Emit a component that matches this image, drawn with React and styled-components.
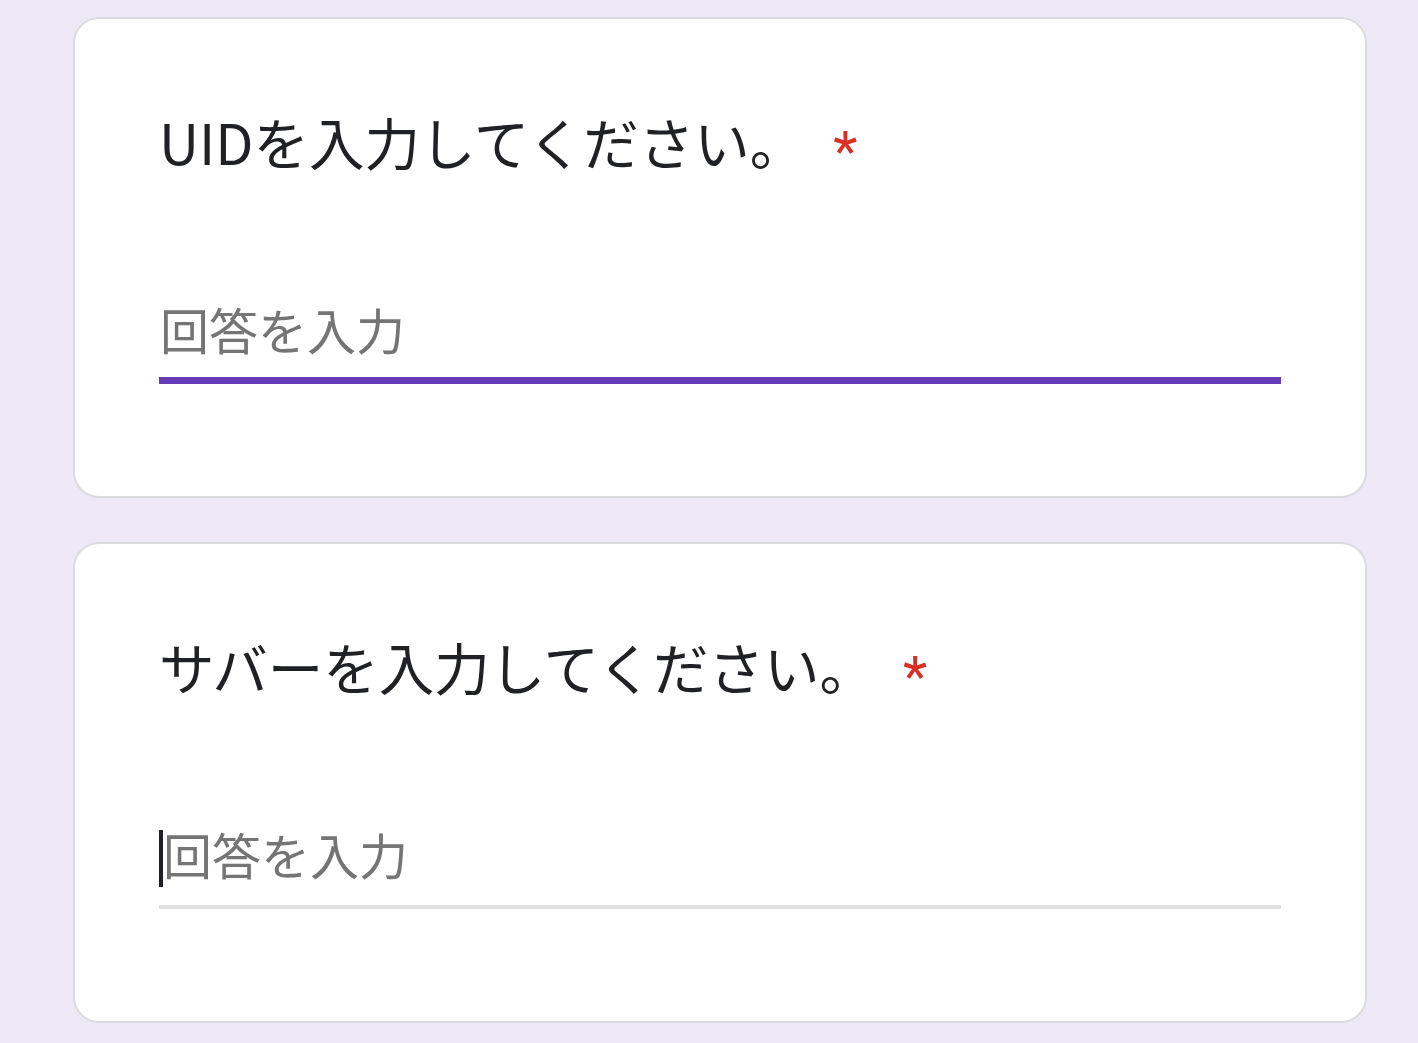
import React from "react";
import styled, { createGlobalStyle } from "styled-components";

const Global = createGlobalStyle`
  html, body {
    margin: 0;
    padding: 0;
    background: #ede9f7;
  }
  body {
    font-family: "Noto Sans CJK JP", "Noto Sans", sans-serif;
  }
`;

const Page = styled.main`
  display: flex;
  flex-direction: column;
  gap: 44px;
  padding: 17px 51px 20px 73px;
  min-height: 1043px;
  box-sizing: border-box;
`;

const Card = styled.section`
  background: #ffffff;
  border: 2px solid #dadce0;
  border-radius: 26px;
  padding: 89px 84px 112px 84px;
  display: flex;
  flex-direction: column;
`;

const Title = styled.div`
  font-family: "Noto Sans CJK JP", sans-serif;
  font-size: 55.5px;
  line-height: 66px;
  height: 66px;
  color: #202124;
  white-space: nowrap;
`;

const Required = styled.span`
  font-family: Roboto, "Noto Sans", sans-serif;
  font-size: 56px;
  line-height: 0;
  color: #d93025;
  margin-left: 28px;
  vertical-align: -6px;
`;

const Field = styled.div`
  position: relative;
  margin-top: 125px;
  padding-bottom: 21px;
  border-bottom: 4px solid #e0e0e0;

  ${(p) =>
    p.$focused &&
    `
    &::after {
      content: "";
      position: absolute;
      left: 0;
      right: 0;
      bottom: -4px;
      height: 7px;
      background: #673ab7;
    }
  `}
`;

const Input = styled.input`
  display: block;
  width: 100%;
  box-sizing: border-box;
  height: 60px;
  border: none;
  outline: none;
  padding: 0 0 0 ${(p) => (p.$shift ? "4px" : "1px")};
  margin: 0;
  background: transparent;
  font-family: "Noto Sans CJK JP", sans-serif;
  font-size: 49px;
  line-height: 60px;
  color: #202124;

  &::placeholder {
    color: #757575;
    opacity: 1;
  }
`;

const Caret = styled.span`
  position: absolute;
  left: 0;
  top: 6px;
  width: 4px;
  height: 57px;
  background: #202124;
`;

function Question({ title, focused, caret }) {
  return (
    <Card>
      <Title>
        {title}
        <Required>*</Required>
      </Title>
      <Field $focused={focused}>
        <Input placeholder="回答を入力" $shift={caret} />
        {caret && <Caret />}
      </Field>
    </Card>
  );
}

export default function App() {
  return (
    <>
      <Global />
      <Page>
        <Question title="UIDを入力してください。" focused />
        <Question title="サバーを入力してください。" caret />
      </Page>
    </>
  );
}
